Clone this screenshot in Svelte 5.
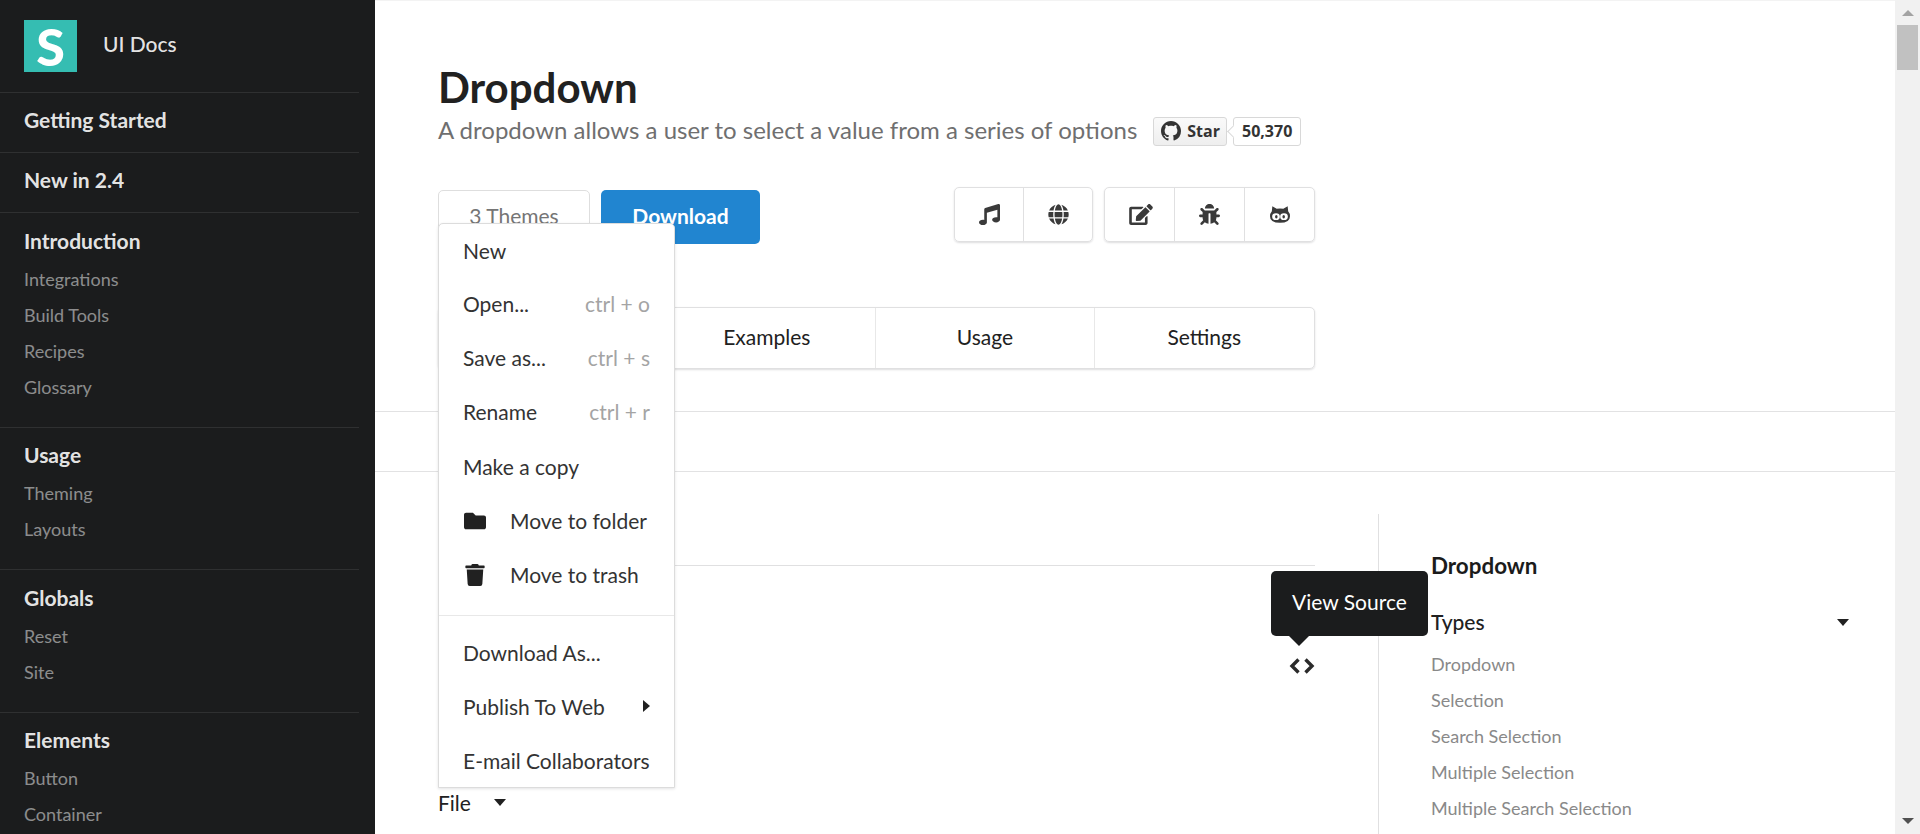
<script>
  const sections = [
    { title: 'Introduction', items: ['Integrations', 'Build Tools', 'Recipes', 'Glossary'] },
    { title: 'Usage', items: ['Theming', 'Layouts'] },
    { title: 'Globals', items: ['Reset', 'Site'] },
    { title: 'Elements', items: ['Button', 'Container'] }
  ];
  // the first tab sits fully behind the open menu
  const tabs = ['', 'Examples', 'Usage', 'Settings'];
  const types = ['Dropdown', 'Selection', 'Search Selection', 'Multiple Selection', 'Multiple Search Selection'];
  const topItems = [
    { label: 'New' },
    { label: 'Open...', hint: 'ctrl + o' },
    { label: 'Save as...', hint: 'ctrl + s' },
    { label: 'Rename', hint: 'ctrl + r' },
    { label: 'Make a copy' }
  ];
</script>

<div class="app">
  <nav class="sidebar">
    <div class="brand">
      <div class="logo">S</div>
      <span class="brand-name">UI Docs</span>
    </div>
    <a class="nav-link">Getting Started</a>
    <a class="nav-link">New in 2.4</a>
    {#each sections as section}
      <div class="nav-section">
        <div class="nav-title">{section.title}</div>
        {#each section.items as item}
          <a class="nav-item">{item}</a>
        {/each}
      </div>
    {/each}
  </nav>

  <main class="main">
    <header class="hero">
      <h1>Dropdown</h1>
      <div class="subtitle">
        <span class="lead">A dropdown allows a user to select a value from a series of options</span>
        <span class="gh">
          <span class="gh-btn">
            <svg viewBox="0 0 16 16" class="gh-mark"><path d="M8 0C3.58 0 0 3.58 0 8c0 3.54 2.29 6.53 5.47 7.59.4.07.55-.17.55-.38 0-.19-.01-.82-.01-1.49-2.01.37-2.53-.49-2.69-.94-.09-.23-.48-.94-.82-1.13-.28-.15-.68-.52-.01-.53.63-.01 1.08.58 1.23.82.72 1.21 1.87.87 2.33.66.07-.52.28-.87.51-1.07-1.78-.2-3.64-.89-3.64-3.95 0-.87.31-1.59.82-2.15-.08-.2-.36-1.02.08-2.12 0 0 .67-.21 2.2.82.64-.18 1.32-.27 2-.27.68 0 1.36.09 2 .27 1.53-1.04 2.2-.82 2.2-.82.44 1.1.16 1.92.08 2.12.51.56.82 1.27.82 2.15 0 3.07-1.87 3.75-3.65 3.95.29.25.54.73.54 1.48 0 1.07-.01 1.93-.01 2.2 0 .21.15.46.55.38A8.013 8.013 0 0016 8c0-4.42-3.58-8-8-8z"/></svg>
            Star
          </span>
          <span class="gh-count">50,370</span>
        </span>
      </div>

      <div class="actions">
        <button class="btn-theme">3 Themes</button>
        <button class="btn-download">Download</button>
        <div class="icon-group first">
          <span class="icon-cell">
            <svg viewBox="0 0 512 512" class="ico"><path d="M511.99 32.01c0-21.71-21.1-37.01-41.6-30.51L150.4 96c-13.3 4.2-22.4 16.5-22.4 30.5v261.42c-10.05-2.38-20.72-3.92-32-3.92-53.02 0-96 28.65-96 64s42.98 64 96 64 96-28.65 96-64V214.31l256-75.02v184.63c-10.05-2.38-20.72-3.92-32-3.92-53.02 0-96 28.65-96 64s42.98 64 96 64 96-28.65 96-64l-.01-351.99z"/></svg>
          </span>
          <span class="icon-cell">
            <svg viewBox="0 0 496 512" class="ico"><path d="M336.5 160C322 70.7 287.8 8 248 8s-74 62.7-88.5 152h177zM152 256c0 22.2 1.2 43.5 3.3 64h185.3c2.1-20.5 3.3-41.8 3.3-64s-1.2-43.5-3.3-64H155.3c-2.1 20.5-3.3 41.8-3.3 64zm324.7-96c-28.6-67.9-86.5-120.4-158-141.6 24.4 33.8 41.2 84.7 50 141.6h108zM177.2 18.4C105.8 39.6 47.8 92.1 19.3 160h108c8.7-56.9 25.5-107.8 49.9-141.6zM487.4 192H372.7c2.1 21 3.3 42.5 3.3 64s-1.2 43-3.3 64h114.6c5.5-20.5 8.6-41.8 8.6-64s-3.1-43.5-8.5-64zM120 256c0-21.5 1.2-43 3.3-64H8.6C3.2 212.5 0 233.8 0 256s3.2 43.5 8.6 64h114.6c-2-21-3.2-42.5-3.2-64zm39.5 96c14.5 89.3 48.7 152 88.5 152s74-62.7 88.5-152h-177zm159.3 141.6c71.4-21.2 129.4-73.7 158-141.6h-108c-8.8 56.9-25.6 107.8-50 141.6zM19.3 352c28.6 67.9 86.5 120.4 158 141.6-24.4-33.8-41.2-84.7-50-141.6h-108z"/></svg>
          </span>
        </div>
        <div class="icon-group second">
          <span class="icon-cell">
            <svg viewBox="0 0 576 512" class="ico wide"><path d="M402.6 83.2l90.2 90.2c3.8 3.8 3.8 10 0 13.8L274.4 405.6l-92.8 10.3c-12.4 1.4-22.9-9.1-21.5-21.5l10.3-92.8L388.8 83.2c3.8-3.8 10-3.8 13.8 0zm162-22.9l-48.8-48.8c-15.2-15.2-39.9-15.2-55.2 0l-35.4 35.4c-3.8 3.8-3.8 10 0 13.8l90.2 90.2c3.8 3.8 10 3.8 13.8 0l35.4-35.4c15.2-15.3 15.2-40 0-55.2zM384 346.2V448H64V128h229.8c3.2 0 6.2-1.3 8.5-3.5l40-40c7.6-7.6 2.2-20.5-8.5-20.5H48C21.5 64 0 85.5 0 112v352c0 26.5 21.5 48 48 48h352c26.5 0 48-21.5 48-48V306.2c0-10.7-12.9-16-20.5-8.5l-40 40c-2.2 2.3-3.5 5.3-3.5 8.5z"/></svg>
          </span>
          <span class="icon-cell">
            <svg viewBox="0 0 512 512" class="ico"><path d="M511.988 288.9c-.478 17.43-15.217 31.1-32.653 31.1H424v16c0 21.864-4.882 42.584-13.6 61.145l60.228 60.228c12.496 12.497 12.496 32.758 0 45.255-12.498 12.497-32.759 12.496-45.256 0l-54.736-54.736C345.886 467.965 314.351 480 280 480V236c0-6.627-5.373-12-12-12h-24c-6.627 0-12 5.373-12 12v244c-34.351 0-65.886-12.035-90.636-32.108l-54.736 54.736c-12.498 12.497-32.759 12.496-45.256 0-12.496-12.497-12.496-32.758 0-45.255l60.228-60.228C92.882 378.584 88 357.864 88 336v-16H32.666C15.23 320 .491 306.33.013 288.9-.484 270.816 14.028 256 32 256h56v-58.745l-46.628-46.628c-12.496-12.497-12.496-32.758 0-45.255 12.498-12.497 32.758-12.497 45.256 0L141.255 160h229.489l54.627-54.627c12.498-12.497 32.758-12.497 45.256 0 12.496 12.497 12.496 32.758 0 45.255L424 197.255V256h56c17.972 0 32.484 14.816 31.988 32.9zM257 0c-61.856 0-112 50.144-112 112h224C369 50.144 318.856 0 257 0z"/></svg>
          </span>
          <span class="icon-cell">
            <svg viewBox="0 0 24 20" class="ico cat">
              <path d="M2.8 0 L8 3 Q12 2.4 16 3 L21.2 0 L21.8 6 Q24 8.5 24 12 Q24 20 12 20 Q0 20 0 12 Q0 8.5 2.2 6 Z"/>
              <ellipse cx="7.2" cy="12.6" rx="4.6" ry="4" fill="#fff"/>
              <ellipse cx="16.8" cy="12.6" rx="4.6" ry="4" fill="#fff"/>
              <ellipse cx="7.6" cy="12.8" rx="1.5" ry="2.1"/>
              <ellipse cx="16.4" cy="12.8" rx="1.5" ry="2.1"/>
            </svg>
          </span>
        </div>
      </div>

      <div class="tabs">
        {#each tabs as tab}
          <div class="tab">{tab}</div>
        {/each}
      </div>
    </header>

    <div class="sub-bar"></div>

    <section class="content">
      <div class="left">
        <div class="rule"></div>
        <div class="code-row">
          <span class="code-wrap">
            <span class="tooltip">View Source</span>
            <svg viewBox="0 0 26 18" class="code-ico"><path d="M9.5 2.5 L3 9 L9.5 15.5 M16.5 2.5 L23 9 L16.5 15.5"/></svg>
          </span>
        </div>
        <div class="file">
          <div class="menu">
            {#each topItems as item}
              <div class="menu-item">
                <span>{item.label}</span>
                {#if item.hint}<span class="hint">{item.hint}</span>{/if}
              </div>
            {/each}
            <div class="menu-item with-icon">
              <svg viewBox="0 0 512 512" class="menu-ico"><path d="M464 128H272l-64-64H48C21.49 64 0 85.49 0 112v288c0 26.51 21.49 48 48 48h416c26.51 0 48-21.49 48-48V176c0-26.51-21.49-48-48-48z"/></svg>
              <span>Move to folder</span>
            </div>
            <div class="menu-item with-icon">
              <svg viewBox="0 0 448 512" class="menu-ico"><path d="M432 32H312l-9.4-18.7A24 24 0 0 0 281.1 0H166.8a23.72 23.72 0 0 0-21.4 13.3L136 32H16A16 16 0 0 0 0 48v32a16 16 0 0 0 16 16h416a16 16 0 0 0 16-16V48a16 16 0 0 0-16-16zM53.2 467a48 48 0 0 0 47.9 45h245.8a48 48 0 0 0 47.9-45L416 128H32z"/></svg>
              <span>Move to trash</span>
            </div>
            <div class="menu-divider"></div>
            <div class="menu-item"><span>Download As...</span></div>
            <div class="menu-item">
              <span>Publish To Web</span>
              <span class="caret-right"></span>
            </div>
            <div class="menu-item"><span>E-mail Collaborators</span></div>
          </div>
          <span>File</span>
          <span class="caret-down"></span>
        </div>
      </div>

      <aside class="toc">
        <div class="toc-title">Dropdown</div>
        <div class="toc-head">
          <span>Types</span>
          <span class="caret-down"></span>
        </div>
        {#each types as type}
          <a class="toc-item">{type}</a>
        {/each}
      </aside>
    </section>
  </main>

  <div class="scrollbar">
    <span class="arrow up"></span>
    <span class="thumb"></span>
    <span class="arrow down"></span>
  </div>
</div>

<style>
  :global(body) {
    margin: 0;
    overflow: hidden;
    background: #fff;
  }

  .app {
    display: flex;
    height: 834px;
    overflow: hidden;
    font-family: Lato, 'Open Sans', sans-serif;
    font-size: 21px;
    color: #212121;
  }

  /* Sidebar */
  .sidebar {
    flex: 0 0 359px;
    padding-right: 16px;
    background: #1b1c1d;
    color: rgba(255, 255, 255, 0.9);
    overflow: hidden;
  }

  .brand {
    display: flex;
    align-items: center;
    gap: 26px;
    height: 93px;
    padding: 0 24px;
    box-sizing: border-box;
    border-bottom: 1px solid #2f3031;
  }

  .logo {
    width: 53px;
    height: 52px;
    flex: none;
    background: #35bdb2;
    color: #fff;
    font-size: 52px;
    font-weight: 900;
    line-height: 52px;
    text-align: center;
  }

  .brand-name {
    font-size: 21px;
    font-weight: 500;
    margin-top: -5px;
  }

  .nav-link {
    display: block;
    height: 59px;
    line-height: 53px;
    padding: 0 24px;
    font-size: 21px;
    font-weight: 700;
    border-bottom: 1px solid #2f3031;
    width: 311px;
  }

  .nav-section {
    padding: 16.5px 24px 22px;
    width: 311px;
    border-bottom: 1px solid #2f3031;
  }

  .nav-title {
    font-size: 21px;
    font-weight: 700;
    line-height: 22px;
    margin-bottom: 9px;
  }

  .nav-item {
    display: block;
    font-size: 18px;
    line-height: 36px;
    color: rgba(255, 255, 255, 0.5);
  }

  /* Main */
  .main {
    flex: 1;
    min-width: 0;
    border-top: 1px solid #f3f3f3;
    box-sizing: border-box;
  }

  .hero {
    padding: 61px 0 0 63px;
    height: 411px;
    box-sizing: border-box;
    border-bottom: 1px solid #e2e2e3;
  }

  h1 {
    margin: 0;
    font-size: 42px;
    font-weight: 700;
    line-height: 50px;
    width: max-content;
  }

  .subtitle {
    display: flex;
    align-items: center;
    gap: 16px;
    height: 30px;
    margin-top: 4px;
    font-size: 24px;
    color: #6f6f70;
  }

  .lead {
    margin-bottom: 4px;
  }

  .gh {
    display: inline-flex;
    gap: 6px;
    font-family: 'Open Sans', sans-serif;
    font-size: 16px;
    font-weight: 700;
    color: #333;
  }

  .gh-btn {
    display: flex;
    align-items: center;
    gap: 6px;
    height: 29px;
    padding: 0 6px 0 7px;
    box-sizing: border-box;
    border: 1px solid #d8d8d8;
    border-radius: 3px;
    background: linear-gradient(#fafafa, #eee);
  }

  .gh-mark {
    width: 20px;
    height: 20px;
    fill: #333;
  }

  .gh-count {
    position: relative;
    display: flex;
    align-items: center;
    height: 29px;
    padding: 0 8px;
    box-sizing: border-box;
    border: 1px solid #d8d8d8;
    border-radius: 3px;
    background: #fff;
  }

  .gh-count::before {
    content: '';
    position: absolute;
    left: -5px;
    top: 9px;
    width: 8px;
    height: 8px;
    background: #fff;
    border-left: 1px solid #d8d8d8;
    border-bottom: 1px solid #d8d8d8;
    transform: rotate(45deg);
  }

  .actions {
    display: flex;
    align-items: flex-start;
    margin-top: 41px;
    width: 877px;
  }

  .btn-theme,
  .btn-download {
    height: 54px;
    margin-top: 3px;
    border-radius: 5px;
    font: inherit;
    padding: 0 0 3px;
  }

  .btn-theme {
    width: 152px;
    background: #fff;
    border: 1px solid #dedede;
    color: #757575;
  }

  .btn-download {
    width: 159px;
    margin-left: 11px;
    background: #2185d0;
    border: none;
    color: #fff;
    font-weight: 700;
  }

  .icon-group {
    display: flex;
    height: 55px;
    box-sizing: border-box;
    border: 1px solid #e0e0e1;
    border-radius: 5px;
    box-shadow: 0 1px 2px rgba(34, 36, 38, 0.15);
  }

  .icon-group.first {
    width: 139px;
    margin-left: auto;
  }

  .icon-group.second {
    width: 211px;
    margin-left: 11px;
  }

  .icon-cell {
    flex: 1;
    display: flex;
    align-items: center;
    justify-content: center;
    box-sizing: border-box;
    border-left: 1px solid #e0e0e1;
  }

  .icon-cell:first-child {
    border-left: none;
  }

  .ico {
    width: 21px;
    height: 21px;
    fill: #3a3a3a;
  }

  .ico.wide {
    width: 24px;
    margin-left: 3px;
  }

  .ico.cat {
    width: 20px;
    height: 17px;
  }

  .tabs {
    display: grid;
    grid-template-columns: repeat(3, 218.2px) 1fr;
    width: 877px;
    height: 62px;
    margin-top: 63px;
    box-sizing: border-box;
    border: 1px solid #e0e0e1;
    border-radius: 5px;
    box-shadow: 0 1px 2px rgba(34, 36, 38, 0.15);
  }

  .tab {
    display: flex;
    align-items: center;
    justify-content: center;
    padding-bottom: 3px;
    border-left: 1px solid #e8e8e8;
  }

  .tab:first-child {
    border-left: none;
  }

  .sub-bar {
    height: 60px;
    box-sizing: border-box;
    border-bottom: 1px solid #e2e2e3;
  }

  .content {
    display: flex;
    padding: 42px 0 0 63px;
  }

  .left {
    width: 877px;
    flex: none;
  }

  .rule {
    height: 52px;
    border-bottom: 1px solid #e0e0e1;
    box-sizing: border-box;
  }

  .code-row {
    display: flex;
    justify-content: flex-end;
    margin-top: 91px;
  }

  .code-wrap {
    position: relative;
    display: block;
    width: 26px;
    height: 18px;
  }

  .code-ico {
    display: block;
    width: 26px;
    height: 18px;
    fill: none;
    stroke: #2b2b2b;
    stroke-width: 3.4;
  }

  .tooltip {
    position: absolute;
    left: -18px;
    bottom: 39px;
    width: 157px;
    height: 65px;
    padding-bottom: 4px;
    box-sizing: border-box;
    display: flex;
    align-items: center;
    justify-content: center;
    background: #1b1c1d;
    color: #fff;
    border-radius: 5px;
    z-index: 3;
  }

  .tooltip::after {
    content: '';
    position: absolute;
    left: 18px;
    top: 100%;
    border: 10px solid transparent;
    border-top-color: #1b1c1d;
    border-bottom: none;
  }

  .file {
    position: relative;
    display: flex;
    align-items: center;
    height: 24px;
    margin-top: 115px;
  }

  .menu {
    position: absolute;
    left: 0;
    bottom: 100%;
    width: 237px;
    box-sizing: border-box;
    margin-bottom: 2px;
    background: #fff;
    border: 1px solid #dcdcdc;
    border-radius: 5px 5px 0 0;
    box-shadow: 0 1px 3px rgba(34, 36, 38, 0.12);
    z-index: 2;
  }

  .menu-item {
    display: flex;
    align-items: center;
    justify-content: space-between;
    height: 54.33px;
    padding: 0 24px;
    white-space: nowrap;
    color: #333;
  }

  .menu-item:first-child {
    height: 52px;
  }

  .menu-item.with-icon {
    justify-content: flex-start;
    gap: 24px;
  }

  .hint {
    color: #a4a4a4;
  }

  .menu-ico {
    width: 22px;
    height: 22px;
    margin-left: 1px;
    fill: #212121;
  }

  .menu-divider {
    height: 1px;
    margin: 13px 0 9px;
    background: #e8e8e8;
  }

  .menu-divider ~ .menu-item {
    height: 54px;
  }

  .caret-right {
    border: 6px solid transparent;
    border-left: 7px solid #212121;
    border-right: none;
  }

  .caret-down {
    margin-left: 23px;
    border: 6.5px solid transparent;
    border-top: 7px solid #212121;
    border-bottom: none;
  }

  /* Right column */
  .toc {
    flex: 1;
    margin-left: 63px;
    padding: 32px 46px 0 52px;
    border-left: 1px solid #e0e0e1;
    box-sizing: border-box;
    height: 400px;
  }

  .toc-title {
    font-size: 22.4px;
    font-weight: 700;
    line-height: 40px;
    color: #1b1b1b;
    margin-bottom: 16px;
  }

  .toc-head {
    display: flex;
    align-items: center;
    justify-content: space-between;
    font-weight: 500;
    line-height: 40px;
    margin-bottom: 4px;
  }

  .toc-item {
    display: block;
    font-size: 18px;
    line-height: 36px;
    color: #898989;
  }

  /* Scrollbar */
  .scrollbar {
    flex: 0 0 25px;
    display: flex;
    flex-direction: column;
    align-items: center;
    background: #f1f1f1;
    box-sizing: border-box;
    padding: 10px 0;
  }

  .arrow {
    width: 0;
    height: 0;
    border-left: 6px solid transparent;
    border-right: 6px solid transparent;
  }

  .arrow.up {
    border-bottom: 6px solid #a3a3a3;
  }

  .arrow.down {
    margin-top: auto;
    border-top: 6px solid #505050;
  }

  .thumb {
    width: 21px;
    height: 45px;
    margin-top: 9px;
    background: #c1c1c1;
  }
</style>
